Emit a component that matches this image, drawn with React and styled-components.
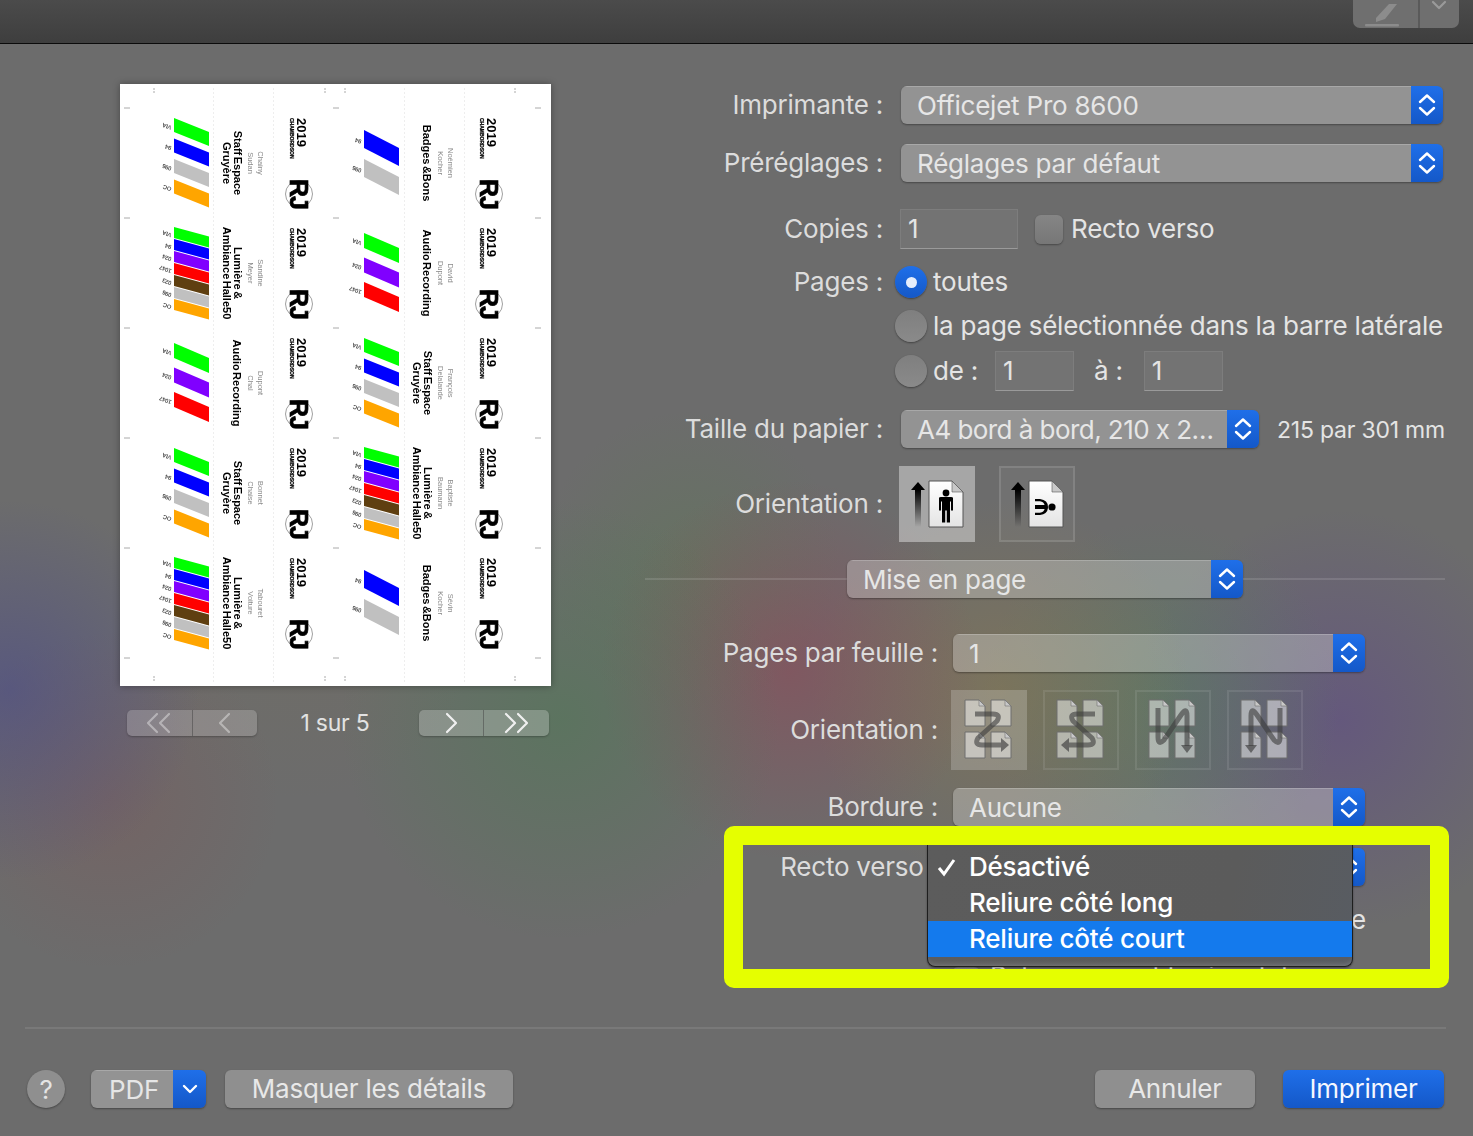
import React from 'react'
import styled, { createGlobalStyle } from 'styled-components'

const GlobalStyle = createGlobalStyle`
  html, body { margin: 0; padding: 0; }
  body { font-family: Inter, "Liberation Sans", sans-serif; background: #6b6b6b; }
`

const Root = styled.div`
  position: relative;
  width: 1473px;
  height: 1136px;
  overflow: hidden;
  display: flex;
  flex-direction: column;
  color: #e4e4e4;
  font-size: 26px;
  letter-spacing: -0.22px;
  background:
    radial-gradient(circle at 10px 690px, rgba(72, 72, 140, 0.55), transparent 190px),
    radial-gradient(circle at 110px 800px, rgba(140, 70, 70, 0.22), transparent 170px),
    radial-gradient(circle at 300px 620px, rgba(120, 110, 80, 0.2), transparent 180px),
    radial-gradient(circle at 560px 720px, rgba(72, 125, 80, 0.45), transparent 220px),
    radial-gradient(circle at 790px 670px, rgba(155, 60, 80, 0.42), transparent 190px),
    radial-gradient(circle at 690px 560px, rgba(90, 125, 80, 0.35), transparent 150px),
    radial-gradient(circle at 1000px 690px, rgba(145, 125, 70, 0.42), transparent 190px),
    radial-gradient(circle at 1160px 700px, rgba(80, 130, 95, 0.42), transparent 180px),
    radial-gradient(circle at 1340px 720px, rgba(95, 75, 135, 0.6), transparent 210px),
    #6c6c6c;
`

const TitleBar = styled.div`
  height: 43px;
  flex: none;
  display: flex;
  justify-content: flex-end;
  padding-right: 14px;
  background: linear-gradient(#4b4b4b, #3e3e3e);
  border-bottom: 1px solid #0b0b0b;
`

const MarkupButton = styled.div`
  width: 106px;
  height: 28px;
  display: flex;
  background: #6f6f6f;
  border-radius: 0 0 7px 7px;
`

const MarkupPart = styled.div`
  width: ${p => p.$w}px;
  display: flex;
  justify-content: center;
  align-items: ${p => p.$top ? 'flex-start' : 'flex-end'};
  border-left: ${p => p.$split ? '2px solid #5a5a5a' : 'none'};
`

const Body = styled.div`
  flex: none;
  height: 983px;
  overflow: hidden;
  display: flex;
`

const LeftColumn = styled.div`
  width: 431px;
  margin-left: 120px;
  padding-top: 40px;
  flex: none;
`

const Sheet = styled.div`
  position: relative;
  width: 431px;
  height: 602px;
  box-sizing: border-box;
  padding: 24px 26px 0 25px;
  background: #fff;
  box-shadow: 0 0 7px rgba(0, 0, 0, 0.35);
  display: grid;
  grid-template-columns: 190px 190px;
  grid-auto-rows: 110px;
  filter: blur(0.3px);
`

const CutMarks = styled.svg`
  position: absolute;
  left: 0;
  top: 0;
`

const Pager = styled.div`
  display: flex;
  align-items: center;
  justify-content: space-between;
  padding: 0 2px 0 7px;
  margin-top: 23px;
`

const PagerCount = styled.span`
  font-size: 23px;
  color: #e2e2e2;
  margin-right: 6px;
`

const PagerGroup = styled.div`
  width: 130px;
  height: 26px;
  display: flex;
  border-radius: 5px;
  overflow: hidden;
  background: rgba(255, 255, 255, ${p => p.$dim ? 0.2 : 0.24});
  box-shadow: 0 1px 2px rgba(0, 0, 0, 0.25);
`

const PagerPart = styled.div`
  flex: 1;
  display: flex;
  align-items: center;
  justify-content: center;
  & + & { border-left: 1px solid rgba(60, 60, 60, 0.45); }
  color: ${p => p.$dim ? 'rgba(255,255,255,0.38)' : '#f0f0f0'};
`

const Form = styled.div`
  width: 800px;
  margin-left: 94px;
  padding-top: 42px;
  flex: none;
`

const Row = styled.div`
  display: flex;
  align-items: center;
  height: ${p => p.$h || 38}px;
  margin-top: ${p => p.$top || 0}px;
`

const Label = styled.div`
  width: ${p => p.$w || 238}px;
  margin-right: ${p => p.$gap || 18}px;
  padding-bottom: 1px;
  flex: none;
  text-align: right;
  white-space: nowrap;
  color: #dcdcdc;
`

const SelectBox = styled.div`
  display: flex;
  width: ${p => p.$w}px;
  height: 38px;
  flex: none;
  border-radius: 6px;
  overflow: hidden;
  box-shadow: 0 1px 2px rgba(0, 0, 0, 0.35);
`

const SelectValue = styled.div`
  flex: 1;
  display: flex;
  align-items: center;
  padding-left: 16px;
  padding-bottom: 1px;
  white-space: nowrap;
  background: rgba(255, 255, 255, 0.27);
  border-top: 1px solid rgba(255, 255, 255, 0.2);
  color: #e6e6e6;
`

const Truncated = styled.span`
  letter-spacing: -0.55px;
`

const SelectArrows = styled.div`
  width: ${p => p.$w || 32}px;
  display: flex;
  align-items: center;
  justify-content: center;
  background: linear-gradient(#1f6fe9, #1458c8);
  flex: none;
`

const NumberField = styled.div`
  width: ${p => p.$w}px;
  height: 40px;
  box-sizing: border-box;
  padding: 0 0 1px 7px;
  display: flex;
  align-items: center;
  flex: none;
  background: rgba(255, 255, 255, 0.05);
  border: 1px solid rgba(255, 255, 255, 0.07);
  border-bottom: 1px solid rgba(255, 255, 255, 0.28);
`

const Checkbox = styled.div`
  width: 28px;
  height: ${p => p.$h || 29}px;
  border-radius: 6px;
  flex: none;
  background: linear-gradient(#858585, #777);
  box-shadow: 0 1px 2px rgba(0, 0, 0, 0.35);
  margin: ${p => p.$margin || 0};
`

const Radio = styled.div`
  width: 32px;
  height: 32px;
  border-radius: 50%;
  flex: none;
  display: flex;
  align-items: center;
  justify-content: center;
  background: ${p => p.$on ? 'linear-gradient(#1f6fe9, #1458c8)' : 'linear-gradient(#7f7f7f, #8a8a8a)'};
  box-shadow: 0 1px 2px rgba(0, 0, 0, 0.4);
  margin-right: 6px;
`

const RadioDot = styled.div`
  width: 11px;
  height: 11px;
  border-radius: 50%;
  background: #e6eefc;
`

const Note = styled.span`
  margin-left: ${p => p.$left || 0}px;
  margin-right: ${p => p.$right || 0}px;
  padding-bottom: 1px;
  white-space: nowrap;
  font-size: ${p => p.$size || 26}px;
`

const PaperNote = styled(Note)`
  padding: 2px 0 0;
`

const OrientTile = styled.div`
  width: 76px;
  height: ${p => p.$h || 76}px;
  box-sizing: border-box;
  margin-right: ${p => p.$gap || 24}px;
  flex: none;
  background: ${p => p.$on ? 'rgba(255,255,255,0.4)' : 'rgba(255,255,255,0.04)'};
  border: 2px solid ${p => p.$on ? 'transparent' : 'rgba(255,255,255,0.12)'};
  svg { display: block; margin: -2px; }
`

const LayoutTile = styled(OrientTile)`
  background: ${p => p.$on ? 'rgba(255,255,255,0.2)' : 'transparent'};
  border-color: ${p => p.$on ? 'transparent' : 'rgba(255,255,255,0.09)'};
`

const Rule = styled.div`
  flex: 1;
  height: 2px;
  background: rgba(255, 255, 255, 0.12);
`

const HiddenLine = styled.div`
  width: 413px;
  padding-bottom: 4px;
  text-align: right;
  white-space: nowrap;
`

const FooterRule = styled.div`
  height: 2px;
  flex: none;
  margin: 0 27px 0 25px;
  background: rgba(255, 255, 255, 0.09);
`

const Footer = styled.div`
  display: flex;
  align-items: flex-start;
  padding: 41px 29px 0 27px;
`

const HelpButton = styled.div`
  width: 38px;
  height: 38px;
  border-radius: 50%;
  display: flex;
  align-items: center;
  justify-content: center;
  background: #8f8f8f;
  box-shadow: 0 1px 2px rgba(0, 0, 0, 0.35);
  margin-right: 26px;
`

const PushButton = styled.div`
  width: ${p => p.$w}px;
  height: 38px;
  box-sizing: border-box;
  padding-bottom: 1px;
  flex: none;
  display: flex;
  align-items: center;
  justify-content: center;
  margin: ${p => p.$margin || 0};
  border-radius: 6px;
  color: ${p => p.$primary ? '#f4f7ff' : '#e8e8e8'};
  background: ${p => p.$primary ? 'linear-gradient(#1f6fe9, #1458c8)' : 'rgba(255,255,255,0.24)'};
  box-shadow: 0 1px 2px rgba(0, 0, 0, 0.35);
`

const PdfButton = styled(SelectBox)`
  margin-right: 19px;
`

const PdfLabel = styled(SelectValue)`
  padding-left: 18px;
`

const Spacer = styled.div`
  flex: 1;
`

const YellowFrame = styled.div`
  position: absolute;
  left: 724px;
  top: 826px;
  width: 725px;
  height: 162px;
  box-sizing: border-box;
  border: 19px solid #e5ff00;
  border-radius: 10px;
  pointer-events: none;
`

const PopupMenu = styled.div`
  position: absolute;
  left: 927px;
  top: 845px;
  width: 426px;
  height: 122px;
  box-sizing: border-box;
  padding-top: 4px;
  background: linear-gradient(100deg, #5c5c5c, #5b5b5b 70%, #585c62);
  border: 1px solid #1e1e1e;
  border-top: none;
  border-radius: 0 0 8px 8px;
  box-shadow: inset 0 -5px 4px -3px rgba(255, 255, 255, 0.14), 0 1px 2px rgba(0, 0, 0, 0.4);
`

const MenuItem = styled.div`
  height: 36px;
  box-sizing: border-box;
  padding-bottom: 1px;
  display: flex;
  align-items: center;
  padding-left: 41px;
  position: relative;
  color: #fff;
  font-weight: 500;
  background: ${p => p.$active ? '#147aed' : 'transparent'};
`

const MenuCheck = styled.svg`
  position: absolute;
  left: 9px;
  top: 8px;
`

const BAND = {
  g: '#00ff00',
  b: '#0000ff',
  p: '#8000ff',
  r: '#ff0000',
  m: '#5f3f10',
  s: '#c0c0c0',
  o: '#ffa500'
}

const LAYOUTS = {
  four: { start: 10, step: 20.5, h: 14, slant: 14 },
  three: { start: 15, step: 24.5, h: 15, slant: 15 },
  two: { start: 22, step: 29, h: 18, slant: 18 },
  seven: { start: 9, step: 12, h: 11, slant: 9.5 }
}

const badges = [
  { t: ['Staff Espace', 'Gruyère'], n: ['Chainy', 'Sudan'], b: 'gbso', l: ['VIA', '94', '096', 'OC'], k: 'four' },
  { t: ['Badges &Bons'], n: ['Noémien', 'Kocher'], b: 'bs', l: ['94', '096'], k: 'two' },
  { t: ['Lumière &', 'Ambiance Halle50'], n: ['Sandine', 'Meyer'], b: 'gbprmso', l: ['VIA', '94', '024', '1047', '023', '096', 'OC'], k: 'seven' },
  { t: ['Audio Recording'], n: ['David', 'Dupont'], b: 'gpr', l: ['VIA', '024', '1047'], k: 'three' },
  { t: ['Audio Recording'], n: ['Dupont', 'Chal'], b: 'gpr', l: ['VIA', '024', '1047'], k: 'three' },
  { t: ['Staff Espace', 'Gruyère'], n: ['François', 'Delalande'], b: 'gbso', l: ['VIA', '94', '096', 'OC'], k: 'four' },
  { t: ['Staff Espace', 'Gruyère'], n: ['Bonnet', 'Chaise'], b: 'gbso', l: ['VIA', '94', '096', 'OC'], k: 'four' },
  { t: ['Lumière &', 'Ambiance Halle50'], n: ['Baptiste', 'Baumann'], b: 'gbprmso', l: ['VIA', '94', '024', '1047', '023', '096', 'OC'], k: 'seven' },
  { t: ['Lumière &', 'Ambiance Halle50'], n: ['Tabouret', 'Voiture'], b: 'gbprmso', l: ['VIA', '94', '024', '1047', '023', '096', 'OC'], k: 'seven' },
  { t: ['Badges &Bons'], n: ['Sévin', 'Kocher'], b: 'bs', l: ['94', '096'], k: 'two' }
]

const badgeFont = '"Liberation Sans", Arial, sans-serif'

function Turned ({ x, y, size, weight, fill, anchor, stroke, gap, children }) {
  return (
    <text
      transform={`translate(${x} ${y}) rotate(90)`}
      fontFamily={badgeFont}
      fontSize={size}
      fontWeight={weight || 400}
      fill={fill || '#000'}
      textAnchor={anchor || 'start'}
      letterSpacing={gap || 0}
      wordSpacing={-1.6}
      stroke={stroke ? '#000' : 'none'}
      strokeWidth={stroke || 0}
    >
      {children}
    </text>
  )
}

function Badge ({ t, n, b, l, k }) {
  const lay = LAYOUTS[k]
  const single = t.length === 1
  return (
    <svg width="190" height="110" viewBox="0 0 190 110">
      {b.split('').map((c, i) => {
        const y = lay.start + i * lay.step
        return (
          <g key={i}>
            <polygon
              points={`29,${y} 64,${y + lay.slant} 64,${y + lay.slant + lay.h} 29,${y + lay.h}`}
              fill={BAND[c]}
            />
            <text
              transform={`translate(27 ${y + lay.h / 2 + 1}) rotate(200)`}
              fontFamily={badgeFont}
              fontSize="6"
              fontWeight="700"
              fill="#555"
            >
              {l[i]}
            </text>
          </g>
        )
      })}
      {single
        ? <Turned x={88} y={55} size={11} weight={700} anchor="middle">{t[0]}</Turned>
        : t.map((line, i) => (
          <Turned key={i} x={89 - i * 11} y={55} size={11} weight={700} anchor="middle">{line}</Turned>
        ))}
      {n.map((line, i) => (
        <Turned key={i} x={113 - i * 10} y={55} size={7.5} fill="#8a8a8a" anchor="middle">{line}</Turned>
      ))}
      <Turned x={152} y={10} size={13} weight={700}>2019</Turned>
      <Turned x={145} y={10} size={5} weight={700} stroke={0.25}>CHAMBORDSON</Turned>
      <circle cx="154" cy="86" r="13.5" fill="#fff" stroke="#888" strokeWidth="0.8" />
      <Turned x={144.5} y={71} size={25} weight={700} stroke={0.7} gap={-1}>RJ</Turned>
    </svg>
  )
}

function Arrows ({ size = 26 }) {
  return (
    <svg width="18" height={size} viewBox="0 0 18 26" fill="none" stroke="#fff" strokeWidth="2.4" strokeLinecap="round" strokeLinejoin="round">
      <path d="M2 10 L9 3.5 L16 10" />
      <path d="M2 16 L9 22.5 L16 16" />
    </svg>
  )
}

function Select ({ w, children }) {
  return (
    <SelectBox $w={w}>
      <SelectValue>{children}</SelectValue>
      <SelectArrows><Arrows /></SelectArrows>
    </SelectBox>
  )
}

function FoldedPage ({ x, y, w, h, fold, fill, stroke }) {
  return (
    <g>
      <path d={`M${x} ${y} H${x + w - fold} L${x + w} ${y + fold} V${y + h} H${x} Z`} fill={fill} stroke={stroke} strokeWidth="1" />
      <path d={`M${x + w - fold} ${y} V${y + fold} H${x + w} Z`} fill="#c8c8c8" stroke={stroke} strokeWidth="0.6" />
    </g>
  )
}

function Person () {
  return (
    <g fill="#000">
      <circle cx="47" cy="27" r="3.4" />
      <path d="M40 32 Q40 31 42 31 H52 Q54 31 54 32 V44.5 H52 V35.5 H51 V56.5 H47.8 V44.5 H46.2 V56.5 H43 V35.5 H42 V44.5 H40 Z" />
    </g>
  )
}

function SleepingPerson () {
  return (
    <g fill="#000">
      <circle cx="53" cy="41" r="3.6" />
      <path d="M36 33 H41 Q49 34 49 41 Q49 48 41 49 H36 V46.8 H41 Q45 46 45.6 43 H36 V39 H45.6 Q45 36 41 35.2 H36 Z" />
    </g>
  )
}

function OrientIcon ({ id, landscape }) {
  return (
    <svg width="76" height="76" viewBox="0 0 76 76">
      <defs>
        <linearGradient id={`shaft${id}`} x1="0" y1="0" x2="0" y2="1">
          <stop offset="0" stopColor="#000" />
          <stop offset="1" stopColor="#000" stopOpacity="0" />
        </linearGradient>
        <linearGradient id={`paper${id}`} x1="0" y1="0" x2="0" y2="1">
          <stop offset="0" stopColor="#fff" />
          <stop offset="1" stopColor="#e4e4e4" />
        </linearGradient>
      </defs>
      <path d="M16 24 H22 V61 H16 Z" fill={`url(#shaft${id})`} />
      <path d="M12 24 L19 16 L26 24 Z" fill="#000" />
      <FoldedPage x={30} y={15} w={34} h={46} fold={11} fill={`url(#paper${id})`} stroke="#555" />
      {landscape ? <SleepingPerson /> : <Person />}
    </svg>
  )
}

const ROUTES = {
  z: { line: 'M24 24 H42 Q50 24 46 31 L27 48 Q23 55 31 55 H50', head: 'M50 48 L58 55 L50 62 Z' },
  s: { line: 'M52 24 H34 Q26 24 30 31 L49 48 Q53 55 45 55 H26', head: 'M26 48 L18 55 L26 62 Z' },
  n: { line: 'M23 18 V47 Q23 56 29 50 L46 25 Q52 16 52 26 V56', head: 'M46 55 L52 63 L58 55 Z' },
  m: { line: 'M53 18 V47 Q53 56 47 50 L30 25 Q24 16 24 26 V56', head: 'M18 55 L24 63 L30 55 Z' }
}

function LayoutIcon ({ route }) {
  const r = ROUTES[route]
  const paper = 'rgba(255,255,255,0.48)'
  return (
    <svg width="76" height="80" viewBox="0 0 76 80">
      <FoldedPage x={14} y={10} w={20} h={26} fold={6} fill={paper} stroke="#6e6e6e" />
      <FoldedPage x={40} y={10} w={20} h={26} fold={6} fill={paper} stroke="#6e6e6e" />
      <FoldedPage x={14} y={42} w={20} h={26} fold={6} fill={paper} stroke="#6e6e6e" />
      <FoldedPage x={40} y={42} w={20} h={26} fold={6} fill={paper} stroke="#6e6e6e" />
      <path d={r.line} fill="none" stroke="rgba(60,60,60,0.6)" strokeWidth="5" />
      <path d={r.head} fill="rgba(60,60,60,0.65)" />
    </svg>
  )
}

function Chevron ({ dir = 'right', double }) {
  const points = dir === 'right' ? 'M2 2 L11 11 L2 20' : 'M11 2 L2 11 L11 20'
  return (
    <svg width={double ? 26 : 13} height="22" viewBox={double ? '0 0 26 22' : '0 0 13 22'} fill="none" stroke="currentColor" strokeWidth="2.2" strokeLinecap="round" strokeLinejoin="round">
      <path d={points} />
      {double && <path d={points} transform="translate(12 0)" />}
    </svg>
  )
}

function App () {
  return (
    <Root>
      <GlobalStyle />
      <TitleBar>
        <MarkupButton>
          <MarkupPart $w={66}>
            <svg width="46" height="24" viewBox="0 0 46 24" fill="#8c8c8c">
              <path d="M14 14 L27 0 H35 L23 15 L14 18 Z" />
              <rect x="3" y="20" width="34" height="2.5" rx="1" />
            </svg>
          </MarkupPart>
          <MarkupPart $w={40} $split $top>
            <svg width="16" height="12" viewBox="0 0 16 12" fill="none" stroke="#9a9a9a" strokeWidth="2.2" strokeLinecap="round" strokeLinejoin="round">
              <path d="M2 2 L8 8 L14 2" />
            </svg>
          </MarkupPart>
        </MarkupButton>
      </TitleBar>

      <Body>
        <LeftColumn>
          <Sheet>
            <CutMarks width="431" height="602" viewBox="0 0 431 602" stroke="#aaa" fill="none">
              {[93.5, 153.5, 284.5, 344.5].map(x => (
                <path key={x} d={`M${x} 4 V598`} stroke="#eee" strokeDasharray="2 2" />
              ))}
              {[0, 1, 2, 3, 4, 5].map(i => (
                <g key={i}>
                  <path d={`M4 ${24 + i * 110} h6`} />
                  <path d={`M213 ${24 + i * 110} h6`} />
                  <path d={`M415 ${24 + i * 110} h6`} />
                </g>
              ))}
              {[34, 205, 225, 395].map(x => (
                <g key={x}>
                  <path d={`M${x} 4 v6`} strokeDasharray="2 1" />
                  <path d={`M${x} 592 v6`} strokeDasharray="2 1" />
                </g>
              ))}
            </CutMarks>
            {badges.map((b, i) => <Badge key={i} {...b} />)}
          </Sheet>
          <Pager>
            <PagerGroup $dim>
              <PagerPart $dim><Chevron dir="left" double /></PagerPart>
              <PagerPart $dim><Chevron dir="left" /></PagerPart>
            </PagerGroup>
            <PagerCount>1 sur 5</PagerCount>
            <PagerGroup>
              <PagerPart><Chevron /></PagerPart>
              <PagerPart><Chevron double /></PagerPart>
            </PagerGroup>
          </Pager>
        </LeftColumn>

        <Form>
          <Row>
            <Label>Imprimante :</Label>
            <Select w={542}>Officejet Pro 8600</Select>
          </Row>
          <Row $top={20}>
            <Label>Préréglages :</Label>
            <Select w={542}>Réglages par défaut</Select>
          </Row>
          <Row $top={27} $h={40}>
            <Label $gap={17}>Copies :</Label>
            <NumberField $w={118}>1</NumberField>
            <Checkbox $margin="0 8px 0 17px" />
            <Note>Recto verso</Note>
          </Row>
          <Row $top={17} $h={32}>
            <Label $gap={12}>Pages :</Label>
            <Radio $on><RadioDot /></Radio>
            <Note>toutes</Note>
          </Row>
          <Row $top={12} $h={32}>
            <Label $gap={12} />
            <Radio />
            <Note>la page sélectionnée dans la barre latérale</Note>
          </Row>
          <Row $top={9} $h={40}>
            <Label $gap={12} />
            <Radio />
            <Note $right={17}>de :</Note>
            <NumberField $w={79}>1</NumberField>
            <Note $left={20} $right={21}>à :</Note>
            <NumberField $w={79}>1</NumberField>
          </Row>
          <Row $top={19}>
            <Label>Taille du papier :</Label>
            <Select w={358}><Truncated>A4 bord à bord, 210 x 2…</Truncated></Select>
            <PaperNote $left={18} $size={23}>215 par 301 mm</PaperNote>
          </Row>
          <Row $top={18} $h={76}>
            <Label $gap={16}>Orientation :</Label>
            <OrientTile $on><OrientIcon id="p" /></OrientTile>
            <OrientTile><OrientIcon id="l" landscape /></OrientTile>
          </Row>
          <Row $top={18}>
            <Rule />
            <SelectBox $w={396}>
              <SelectValue>Mise en page</SelectValue>
              <SelectArrows><Arrows /></SelectArrows>
            </SelectBox>
            <Rule />
          </Row>
          <Row $top={36}>
            <Label $w={293} $gap={15}>Pages par feuille :</Label>
            <Select w={412}>1</Select>
          </Row>
          <Row $top={18} $h={80}>
            <Label $w={293} $gap={13}>Orientation :</Label>
            <LayoutTile $on $h={80} $gap={16}><LayoutIcon route="z" /></LayoutTile>
            <LayoutTile $h={80} $gap={16}><LayoutIcon route="s" /></LayoutTile>
            <LayoutTile $h={80} $gap={16}><LayoutIcon route="n" /></LayoutTile>
            <LayoutTile $h={80} $gap={16}><LayoutIcon route="m" /></LayoutTile>
          </Row>
          <Row $top={18}>
            <Label $w={293} $gap={15}>Bordure :</Label>
            <Select w={412}>Aucune</Select>
          </Row>
          <Row $top={22}>
            <Label $w={293} $gap={15}>Recto verso :</Label>
            <Select w={412} />
          </Row>
          <Row $top={16}>
            <Label $w={293} $gap={15} />
            <HiddenLine>de la page</HiddenLine>
          </Row>
          <Row $top={18} $h={36}>
            <Label $w={293} $gap={1} />
            <Checkbox $h={18} $margin="0 0 0 13px" />
            <Note $left={10}>Retournement horizontal</Note>
          </Row>
        </Form>
      </Body>

      <FooterRule />
      <Footer>
        <HelpButton>?</HelpButton>
        <PdfButton $w={115}>
          <PdfLabel>PDF</PdfLabel>
          <SelectArrows $w={33}>
            <svg width="16" height="12" viewBox="0 0 16 12" fill="none" stroke="#fff" strokeWidth="2.4" strokeLinecap="round" strokeLinejoin="round">
              <path d="M2 3 L8 9 L14 3" />
            </svg>
          </SelectArrows>
        </PdfButton>
        <PushButton $w={288}>Masquer les détails</PushButton>
        <Spacer />
        <PushButton $w={160} $margin="0 28px 0 0">Annuler</PushButton>
        <PushButton $w={161} $primary>Imprimer</PushButton>
      </Footer>

      <PopupMenu>
        <MenuItem>
          <MenuCheck width="20" height="20" viewBox="0 0 20 20" fill="none" stroke="#fff" strokeWidth="3">
            <path d="M2 11 L7 17 L17 3" />
          </MenuCheck>
          Désactivé
        </MenuItem>
        <MenuItem>Reliure côté long</MenuItem>
        <MenuItem $active>Reliure côté court</MenuItem>
      </PopupMenu>
      <YellowFrame />
    </Root>
  )
}

export default App
